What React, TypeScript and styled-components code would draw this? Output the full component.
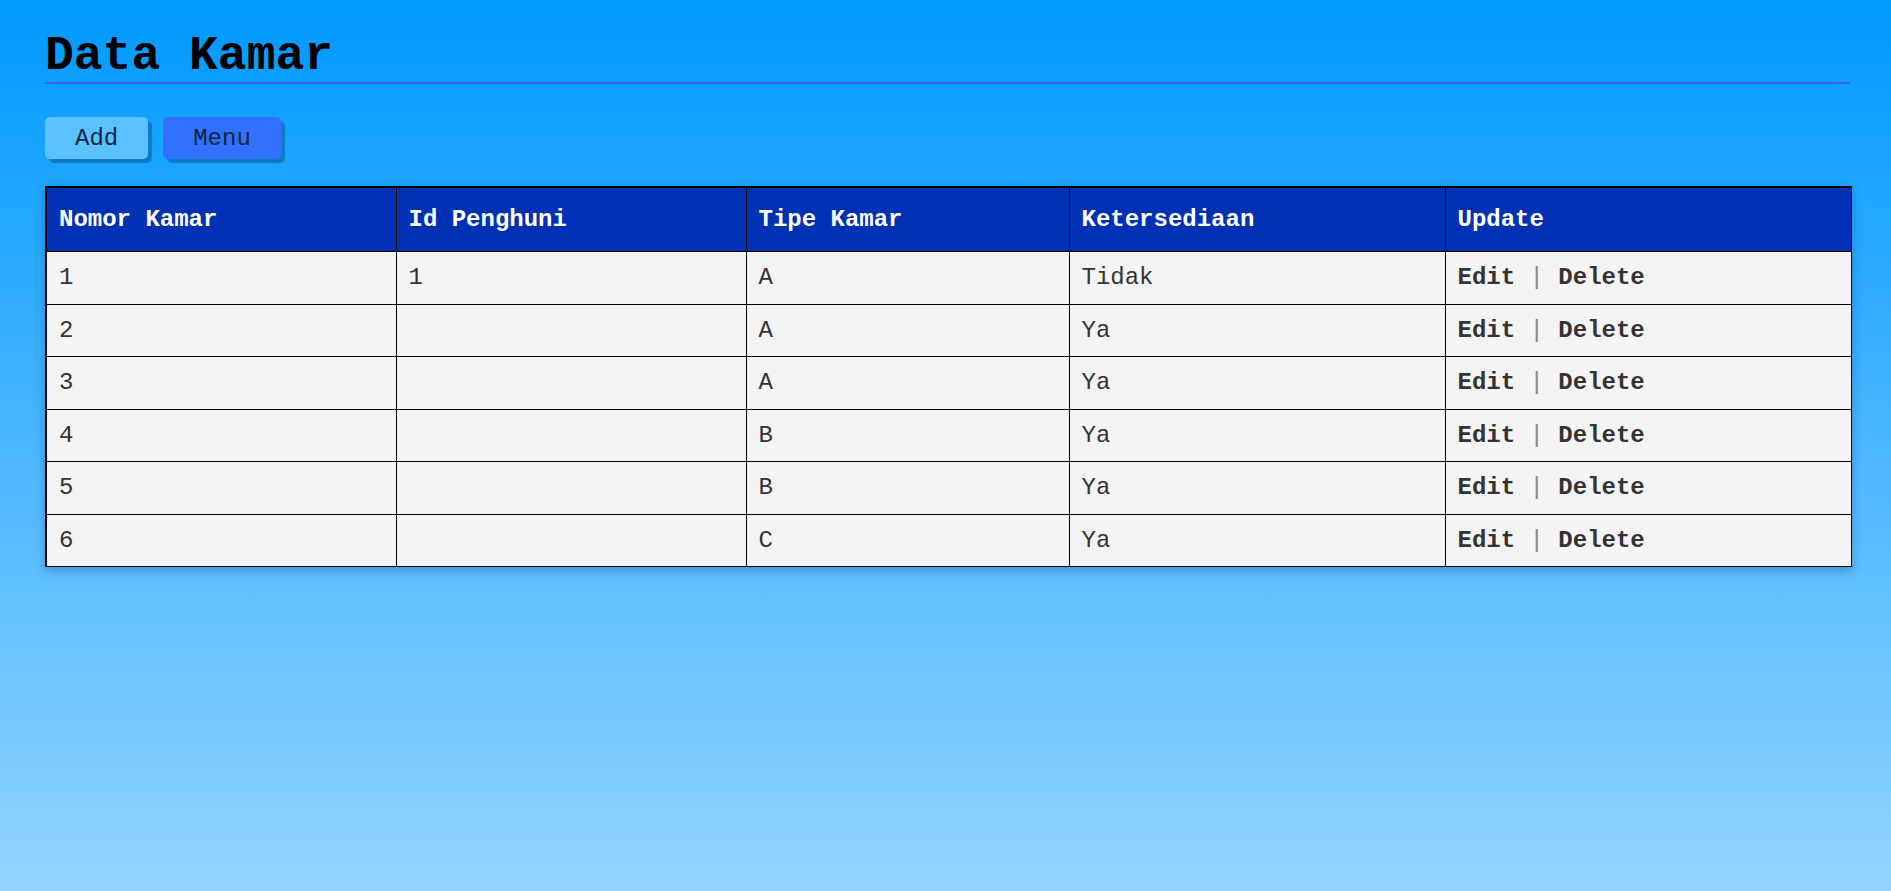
import React from "react";
import styled, { createGlobalStyle } from "styled-components";

const GlobalStyle = createGlobalStyle`
  html, body {
    margin: 0;
    padding: 0;
  }
  body {
    font-family: "Liberation Mono", "Courier New", monospace;
    background: #0099ff;
  }
`;

const Page = styled.div`
  min-height: 100vh;
  box-sizing: border-box;
  padding: 30px 41px 40px 45px;
  background: linear-gradient(180deg, #0099ff 0%, #93d4ff 100%);
`;

const Title = styled.h1`
  margin: 0;
  font-family: "Liberation Mono", "Courier New", monospace;
  font-size: 48px;
  line-height: 52px;
  font-weight: bold;
  color: #000;
  border-bottom: 2px solid #3a62f2;
`;

const Toolbar = styled.div`
  display: flex;
  gap: 15px;
  margin-top: 33px;
`;

const Button = styled.button<{ $variant: "light" | "strong" }>`
  height: 42px;
  padding: 0 30px;
  border: none;
  border-radius: 5px;
  font-family: "Liberation Mono", "Courier New", monospace;
  font-size: 24px;
  color: #0a2540;
  cursor: pointer;
  background: ${(p) => (p.$variant === "light" ? "#5cc2ff" : "#3370ff")};
  box-shadow: 4px 4px 1px #0d7cc4;
`;

const Table = styled.table`
  width: calc(100% - 2px);
  margin-top: 27px;
  border-collapse: collapse;
  table-layout: fixed;
  border-top: 2px solid #000;
  border-left: 2px solid #000;
  border-right: 1px solid #000;
  border-bottom: 1px solid #000;
  box-shadow: 0 4px 10px rgba(0, 40, 90, 0.3);
`;

const HeadCell = styled.th`
  height: 63px;
  padding: 0 12px;
  text-align: left;
  font-size: 24px;
  font-weight: bold;
  color: #fff;
  background: #0030b4;
  border: 1px solid #000;
`;

const Cell = styled.td<{ $bold?: boolean }>`
  height: 51.5px;
  padding: 0 12px;
  font-size: 24px;
  font-weight: ${(p) => (p.$bold ? "bold" : "normal")};
  color: #333;
  background: #f4f4f4;
  border: 1px solid #000;
  white-space: nowrap;
`;

const ActionLink = styled.a`
  color: #333;
  font-weight: bold;
  text-decoration: none;
`;

const Divider = styled.span`
  color: #8a8a80;
  font-weight: normal;
`;

const columns = [
  { label: "Nomor Kamar", width: 350 },
  { label: "Id Penghuni", width: 350 },
  { label: "Tipe Kamar", width: 323 },
  { label: "Ketersediaan", width: 376 },
  { label: "Update", width: 406 },
];

const rows = [
  { nomor: "1", penghuni: "1", tipe: "A", tersedia: "Tidak" },
  { nomor: "2", penghuni: "", tipe: "A", tersedia: "Ya" },
  { nomor: "3", penghuni: "", tipe: "A", tersedia: "Ya" },
  { nomor: "4", penghuni: "", tipe: "B", tersedia: "Ya" },
  { nomor: "5", penghuni: "", tipe: "B", tersedia: "Ya" },
  { nomor: "6", penghuni: "", tipe: "C", tersedia: "Ya" },
];

export default function App() {
  return (
    <>
      <GlobalStyle />
      <Page>
        <Title>Data Kamar</Title>
        <Toolbar>
          <Button $variant="light">Add</Button>
          <Button $variant="strong">Menu</Button>
        </Toolbar>
        <Table>
          <colgroup>
            {columns.map((c) => (
              <col key={c.label} style={{ width: c.width }} />
            ))}
          </colgroup>
          <thead>
            <tr>
              {columns.map((c) => (
                <HeadCell key={c.label}>{c.label}</HeadCell>
              ))}
            </tr>
          </thead>
          <tbody>
            {rows.map((r) => (
              <tr key={r.nomor}>
                <Cell>{r.nomor}</Cell>
                <Cell>{r.penghuni}</Cell>
                <Cell>{r.tipe}</Cell>
                <Cell>{r.tersedia}</Cell>
                <Cell $bold>
                  <ActionLink href="#">Edit</ActionLink> <Divider>|</Divider>{" "}
                  <ActionLink href="#">Delete</ActionLink>
                </Cell>
              </tr>
            ))}
          </tbody>
        </Table>
      </Page>
    </>
  );
}
